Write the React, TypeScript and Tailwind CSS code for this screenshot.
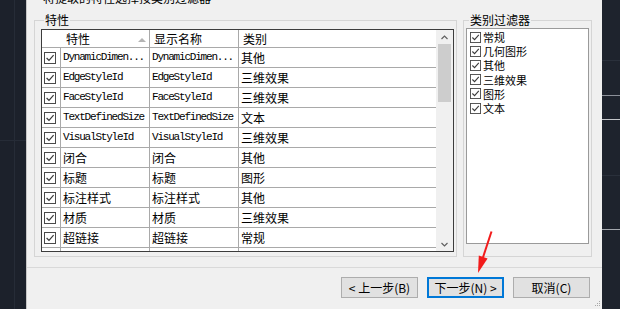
import React from "react";

const ROWS: [string, string, string][] = [
  ["DynamicDimen...", "DynamicDimen...", "其他"],
  ["EdgeStyleId", "EdgeStyleId", "三维效果"],
  ["FaceStyleId", "FaceStyleId", "三维效果"],
  ["TextDefinedSize", "TextDefinedSize", "文本"],
  ["VisualStyleId", "VisualStyleId", "三维效果"],
  ["闭合", "闭合", "其他"],
  ["标题", "标题", "图形"],
  ["标注样式", "标注样式", "其他"],
  ["材质", "材质", "三维效果"],
  ["超链接", "超链接", "常规"],
  ["", "", ""],
];

const FILTERS = ["常规", "几何图形", "其他", "三维效果", "图形", "文本"];

const cjk = "font-['Noto_Sans_CJK_SC',sans-serif] text-[12px]";
const mono = "font-['Liberation_Mono','Noto_Sans_CJK_SC',monospace] text-[11px] tracking-[-1.2px] text-[#111]";

function Check({ size = 12 }: { size?: number }) {
  return (
    <svg width={size} height={size} viewBox="0 0 12 12" className="shrink-0">
      <rect x="0.5" y="0.5" width="11" height="11" fill="#fff" stroke="#4a4a4a" />
      <polyline points="2.6,6 5,8.4 9.6,3.2" fill="none" stroke="#3a3a3a" strokeWidth="1.2" />
    </svg>
  );
}

function Cell({ text, last }: { text: string; last?: boolean }) {
  const isLatin = /^[\x00-\x7f]*$/.test(text);
  return (
    <div
      className={`flex items-center pl-[2px] overflow-hidden whitespace-nowrap text-black ${last ? "" : "border-r border-[#a9a9a9]"} ${isLatin ? mono : cjk}`}
    >
      {text}
    </div>
  );
}

function PropTable() {
  return (
    <div className="flex w-[413px] h-[223px] border border-[#3c3c3c] bg-white overflow-hidden">
      <div className="flex-1 flex flex-col overflow-hidden">
        <div className={`grid grid-cols-[19px_89px_89px_1fr] h-[18px] shrink-0 border-b border-[#a9a9a9] ${cjk}`}>
          <div />
          <div className="flex items-center justify-between pl-[5px] pr-[3px] border-r border-[#a9a9a9]">
            <span>特性</span>
            <svg width="8" height="5" viewBox="0 0 8 5">
              <path d="M0 5 L4 1 L8 5 Z" fill="#b4b4b4" />
            </svg>
          </div>
          <div className="flex items-center pl-[4px] border-r border-[#a9a9a9]">显示名称</div>
          <div className="flex items-center pl-[4px]">类别</div>
        </div>
        {ROWS.map((r, i) => (
          <div key={i} className="grid grid-cols-[19px_89px_89px_1fr] h-[20px] shrink-0 border-b border-[#a9a9a9]">
            <div className="flex items-center pl-[2px] border-r border-[#a9a9a9]">
              {r[0] && <Check />}
            </div>
            <Cell text={r[0]} />
            <Cell text={r[1]} />
            <Cell text={r[2]} last />
          </div>
        ))}
      </div>
      <div className="w-[17px] shrink-0 bg-[#f0f0f0] flex flex-col items-center">
        <div className="h-[14px] w-full flex items-center justify-center">
          <svg width="7" height="5" viewBox="0 0 7 5">
            <path d="M0.5 4 L3.5 1 L6.5 4" fill="none" stroke="#606060" strokeWidth="1.2" />
          </svg>
        </div>
        <div className="w-[13px] h-[58px] bg-[#cdcdcd]" />
        <div className="flex-1" />
        <div className="h-[14px] w-full flex items-center justify-center">
          <svg width="7" height="5" viewBox="0 0 7 5">
            <path d="M0.5 1 L3.5 4 L6.5 1" fill="none" stroke="#606060" strokeWidth="1.2" />
          </svg>
        </div>
      </div>
    </div>
  );
}

function Button({ label, primary }: { label: string; primary?: boolean }) {
  return (
    <div
      className={`w-[77px] h-[21px] flex items-center justify-center bg-[#e1e1e1] text-black ${cjk} ${
        primary ? "border-2 border-[#0078d7]" : "border border-[#adadad]"
      }`}
    >
      {label}
    </div>
  );
}

export default function App() {
  return (
    <div className="w-[620px] h-[309px] flex overflow-hidden bg-[#1d222c] relative">
      <div className="w-[26px] h-full shrink-0 relative bg-[#1c212b]">
        <div className="absolute left-[14px] top-0 bottom-0 w-px bg-[#262c37]" />
        <div className="absolute left-0 right-0 top-[140px] h-px bg-[#262c37]" />
      </div>

      <div className="w-[576px] h-full shrink-0 bg-[#f0f0f0] border-l border-[#c6c6c6] flex flex-col relative">
        <div className="h-[6px] overflow-hidden pl-[16px]">
          <div className={`-mt-[9px] leading-[14px] text-black ${cjk}`}>将提取的特性选择按类别过滤器</div>
        </div>

        <div className="flex mt-[7px] pl-[7px] gap-[6px]">
          <fieldset className="w-[423px] h-[244px] border border-[#d5d5d5]">
            <legend className={`ml-[9px] px-[1px] leading-[14px] text-black ${cjk}`}>特性</legend>
            <div className="mt-[2px] ml-[6px]">
              <PropTable />
            </div>
          </fieldset>

          <fieldset className="w-[129px] h-[244px] border border-[#d5d5d5]">
            <legend className={`ml-[5px] px-[1px] leading-[14px] text-black ${cjk}`}>类别过滤器</legend>
            <div className="mt-[1px] ml-[2px] w-[123px] h-[216px] border border-[#9a9a9a] bg-white pt-[1px]">
              {FILTERS.map((f) => (
                <div key={f} className="h-[14.2px] flex items-center gap-[2px] pl-[3px]">
                  <Check size={11} />
                  <span className="font-['Noto_Sans_CJK_SC',sans-serif] text-[11px] leading-[12px] text-black">{f}</span>
                </div>
              ))}
            </div>
          </fieldset>
        </div>

        <div className="mt-[10px] border-t border-[#d9d9d9] h-px bg-white" />

        <div className="flex justify-end gap-[9px] pr-[12px] mt-[9px]">
          <Button label="< 上一步(B)" />
          <Button label="下一步(N) >" primary />
          <Button label="取消(C)" />
        </div>

        <svg className="absolute right-[1px] bottom-[2px]" width="7" height="7" viewBox="0 0 7 7">
          <rect x="5" y="1" width="1" height="1" fill="#a8a8a8" />
          <rect x="3" y="3" width="1" height="1" fill="#a8a8a8" />
          <rect x="5" y="3" width="1" height="1" fill="#a8a8a8" />
          <rect x="1" y="5" width="1" height="1" fill="#a8a8a8" />
          <rect x="3" y="5" width="1" height="1" fill="#a8a8a8" />
          <rect x="5" y="5" width="1" height="1" fill="#a8a8a8" />
        </svg>
      </div>

      <div className="flex-1 h-full relative bg-[#1e232d]">
        <div className="absolute left-0 right-0 top-[95px] h-px bg-[#8c9099]" />
        <div className="absolute left-0 right-0 top-[119px] h-px bg-[#c4c6ca]" />
        <div className="absolute left-0 right-0 top-[229px] h-px bg-[#a4a8ae]" />
        <div className="absolute left-0 right-0 top-[175px] h-px bg-[#2a303b]" />
        <div className="absolute left-0 right-0 top-[60px] h-px bg-[#2a303b]" />
      </div>

      <svg className="absolute left-0 top-0 pointer-events-none" width="620" height="309">
        <line x1="491.5" y1="231.5" x2="481.8" y2="261" stroke="#f21b1b" strokeWidth="2" />
        <polygon points="478,273 487.6,258.4 478.8,255.4" fill="#f21b1b" />
      </svg>
    </div>
  );
}
